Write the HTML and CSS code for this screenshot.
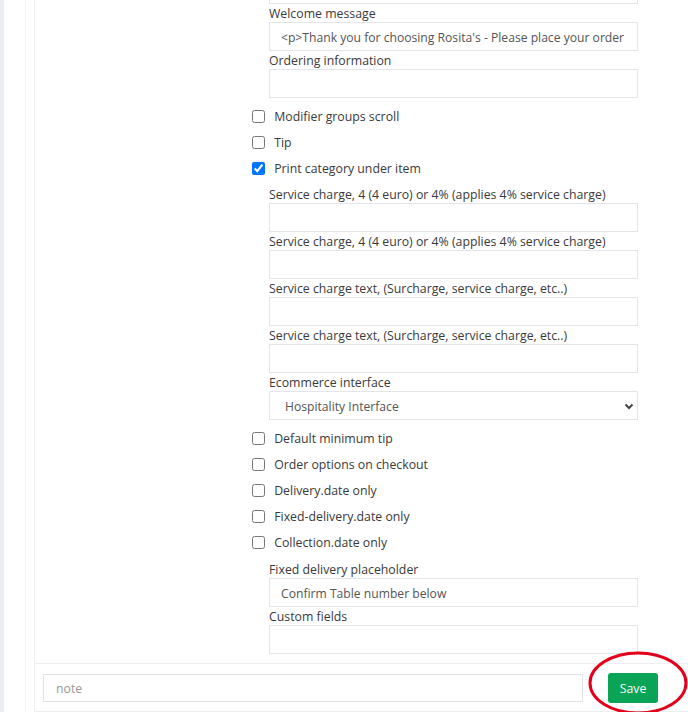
FILE: index.html
```html
<!DOCTYPE html>
<html lang="en">
<head>
  <meta charset="UTF-8">
  <meta name="viewport" content="width=device-width, initial-scale=1.0">
  <title>Ecommerce settings</title>
  <link rel="stylesheet" href="styles.css">
</head>
<body>
  <div class="page">
    <div class="wrap">
      <form class="card" onsubmit="return false">
        <div class="card-body">
          <div class="fields">
            <input class="field cut" type="text">
            <label class="lbl">Welcome message</label>
            <input class="field" type="text" value="<p>Thank you for choosing Rosita's - Please place your order">
            <label class="lbl">Ordering information</label>
            <input class="field" type="text">
          </div>

          <div class="checks">
            <label class="check"><input type="checkbox"> Modifier groups scroll</label>
            <label class="check"><input type="checkbox"> Tip</label>
            <label class="check"><input type="checkbox" checked> Print category under item</label>
          </div>

          <div class="fields">
            <label class="lbl">Service charge, 4 (4 euro) or 4% (applies 4% service charge)</label>
            <input class="field" type="text">
            <label class="lbl">Service charge, 4 (4 euro) or 4% (applies 4% service charge)</label>
            <input class="field" type="text">
            <label class="lbl">Service charge text, (Surcharge, service charge, etc..)</label>
            <input class="field" type="text">
            <label class="lbl">Service charge text, (Surcharge, service charge, etc..)</label>
            <input class="field" type="text">
            <label class="lbl">Ecommerce interface</label>
            <div class="select-box">
              <select class="field">
                <option>Hospitality Interface</option>
                <option>Retail Interface</option>
              </select>
              <svg class="chev" width="10" height="7" viewBox="0 0 10 7"><path d="M1.5 1.5 L5 5 L8.5 1.5" fill="none" stroke="#444" stroke-width="2"/></svg>
            </div>
          </div>

          <div class="checks">
            <label class="check"><input type="checkbox"> Default minimum tip</label>
            <label class="check"><input type="checkbox"> Order options on checkout</label>
            <label class="check"><input type="checkbox"> Delivery.date only</label>
            <label class="check"><input type="checkbox"> Fixed-delivery.date only</label>
            <label class="check"><input type="checkbox"> Collection.date only</label>
          </div>

          <div class="fields">
            <label class="lbl">Fixed delivery placeholder</label>
            <input class="field" type="text" value="Confirm Table number below">
            <label class="lbl">Custom fields</label>
            <input class="field" type="text">
          </div>
        </div>

        <div class="card-footer">
          <input class="note" type="text" placeholder="note">
          <button class="save" type="submit">Save</button>
        </div>
      </form>
    </div>
  </div>

  <svg class="circle" width="110" height="80" viewBox="0 0 110 80">
    <ellipse cx="55" cy="40" rx="48" ry="30" fill="none" stroke="#e3001b" stroke-width="3"/>
  </svg>
</body>
</html>
```

FILE: styles.css
```css
body {
  margin: 0;
  font-family: "Open Sans", Arial, sans-serif;
  font-size: 12.3px;
  color: #3a3a3a;
  background: #fff;
  overflow: hidden;
  height: 712px;
}
.page {
  border-left: 4px solid #e9eef3;
  height: 100%;
}
.wrap {
  margin-left: 21px;
  border-left: 1px solid #f4f5f7;
  padding-left: 8px;
  height: 100%;
}
.card {
  border-left: 1px solid #eef0f3;
  margin-right: -20px;
}
.card-body {
  padding: 0 0 9px 217px;
}
.fields {
  display: flex;
  flex-direction: column;
  width: 369px;
  padding-left: 17px;
}
.lbl {
  line-height: 17px;
  padding-top: 1px;
}
.field {
  box-sizing: border-box;
  height: 29px;
  width: 100%;
  border: 1px solid #e3e5ea;
  border-radius: 0;
  padding: 1px 8px 0 11px;
  font: inherit;
  font-size: 12.15px;
  color: #555;
  background: #fff;
  outline: none;
}
.cut {
  margin-top: -25px;
}
.select-box {
  position: relative;
}
select.field {
  appearance: none;
  padding-left: 15px;
}
.chev {
  position: absolute;
  right: 4px;
  top: 12px;
  pointer-events: none;
}
.checks {
  padding: 5px 0 4px;
}
.checks + .fields + .checks {
  padding-bottom: 5px;
}
.check {
  display: flex;
  align-items: center;
  height: 26px;
  white-space: pre;
}
.check input {
  margin: 0 6px 0 0;
  width: 13px;
  height: 13px;
}
.card-footer {
  display: flex;
  align-items: center;
  border-top: 1px solid #eceef1;
  border-bottom: 1px solid #eceef1;
  padding: 9px 8px 8px;
}
.note {
  box-sizing: border-box;
  width: 540px;
  height: 28px;
  border: 1px solid #dfe2e7;
  padding: 0 12px;
  font: inherit;
  color: #555;
  outline: none;
}
.note::placeholder {
  color: #999;
}
.save {
  margin-left: 25px;
  width: 50px;
  height: 30px;
  border: none;
  border-radius: 3px;
  background: #0aa456;
  color: #fff;
  font: inherit;
  cursor: pointer;
}
.circle {
  position: absolute;
  left: 583px;
  top: 643px;
}
```
